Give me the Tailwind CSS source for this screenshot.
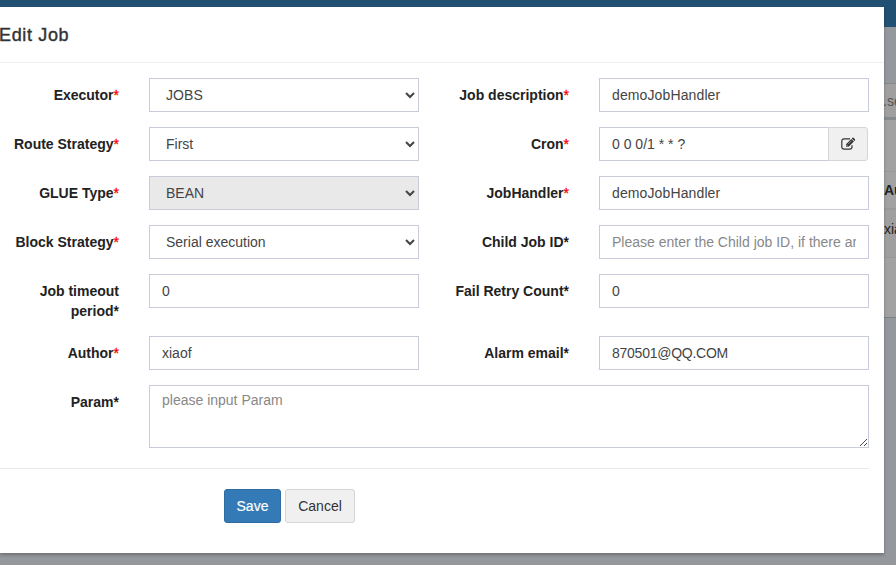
<!DOCTYPE html>
<html lang="en">
<head>
<meta charset="utf-8">
<title>Edit Job</title>
<script src="https://cdn.jsdelivr.net/npm/@tailwindcss/browser@4"></script>
</head>
<body class="relative h-[565px] w-[896px] overflow-hidden bg-[#94979c] font-['Liberation_Sans',Arial,sans-serif] text-sm leading-5 text-[#333]">
<!-- Dimmed page behind the dialog -->
<div class="flex h-full flex-col">
  <div class="h-[27px] shrink-0 bg-[#225072]"></div>
  <div class="mt-14 flex h-[34px] shrink-0 items-center justify-end overflow-hidden border-t border-[#85878b] bg-[#9f9f9f] text-[#555]"><span class="w-[13px] whitespace-nowrap">.se</span></div>
  <div class="h-[3px] shrink-0 bg-[#85888f]"></div>
  <div class="flex h-[198px] shrink-0 flex-col items-end border-b border-[#7d8083] bg-[#a2a2a2]">
    <div class="h-[52px] w-full border-b border-[#989898]"></div>
    <div class="flex h-[38px] w-full items-center justify-end border-b-2 border-[#999] font-bold text-[#222]"><span class="w-3 whitespace-nowrap">Au</span></div>
    <div class="flex h-[48px] w-full justify-end border-b border-[#989898] bg-[#9f9f9f] pt-[9px] text-[#222]"><span class="w-3 whitespace-nowrap">xia</span></div>
  </div>
</div>

<!-- Dialog -->
<div class="absolute left-0 top-[7px] flex h-[546px] w-[884px] flex-col bg-white shadow-[0_2px_3px_rgba(0,0,0,0.25)]">
  <div class="flex h-14 shrink-0 items-center border-b border-[#f0f0f0]"><h4 class="-ml-px text-lg tracking-[0.65px] [-webkit-text-stroke:0.4px_#333]">Edit Job</h4></div>
  <form class="pr-[15px] pt-[15px]">
    <div class="grid grid-cols-[119px_270px_150px_270px] gap-y-[15px]">
      <label class="whitespace-nowrap pt-[7px] text-right font-bold text-[#222]">Executor<span class="font-normal text-[#f00] [-webkit-text-stroke:0.3px_#f00]">*</span></label>
      <div class="ml-[30px] flex h-[34px] w-[270px] items-center justify-between border border-[#c8cbd9] pl-4 pr-0.5 text-[#444]"><span class="tracking-[0.1px]">JOBS</span><svg class="h-3 w-3" viewBox="0 0 12 12" fill="none" stroke="#444" stroke-width="2"><path d="M2 4l4 4 4-4"/></svg></div>
      <label class="ml-[30px] w-[150px] whitespace-nowrap pt-[7px] text-right font-bold text-[#222]">Job description<span class="font-normal text-[#f00] [-webkit-text-stroke:0.3px_#f00]">*</span></label>
      <input class="ml-[60px] h-[34px] w-[270px] border border-[#c8cbd9] px-3 tracking-[0.12px] text-[#444]" value="demoJobHandler">

      <label class="whitespace-nowrap pt-[7px] text-right font-bold text-[#222]">Route Strategy<span class="font-normal text-[#f00] [-webkit-text-stroke:0.3px_#f00]">*</span></label>
      <div class="ml-[30px] flex h-[34px] w-[270px] items-center justify-between border border-[#c8cbd9] pl-4 pr-0.5 text-[#444]"><span>First</span><svg class="h-3 w-3" viewBox="0 0 12 12" fill="none" stroke="#444" stroke-width="2"><path d="M2 4l4 4 4-4"/></svg></div>
      <label class="ml-[30px] w-[150px] pt-[7px] text-right font-bold text-[#222]">Cron<span class="font-normal text-[#f00] [-webkit-text-stroke:0.3px_#f00]">*</span></label>
      <div class="ml-[60px] flex h-[34px] w-[270px]">
        <input class="w-[229px] border border-r-0 border-[#c8cbd9] px-3 text-[#444]" value="0 0 0/1 * * ?">
        <button type="button" class="flex w-10 items-center justify-center rounded-r-[3px] border border-[#d5d5d5] bg-[#f0f0f0]" aria-label="Edit cron">
          <svg class="h-[14px] w-[14px]" viewBox="0 0 14 14" fill="none" stroke="#333"><path stroke-width="1.2" d="M9 1.9H3A2.2 2.2 0 0 0 .8 4.1v5.8A2.2 2.2 0 0 0 3 12.1h5.8A2.2 2.2 0 0 0 11 9.9V8.3"/><path fill="#333" stroke="none" d="M5 9.8V7.2l5.3-5.3 2.6 2.6L7.6 9.8zM10.8 1.4l.7-.7c.3-.3.7-.3 1 0l1.6 1.6c.3.3.3.7 0 1l-.8.7z"/><path stroke="#f0f0f0" stroke-width=".5" d="M7 7.2l3.4-3.4M5.7 7.7v1.3h1.4"/></svg>
        </button>
      </div>

      <label class="whitespace-nowrap pt-[7px] text-right font-bold text-[#222]">GLUE Type<span class="font-normal text-[#f00] [-webkit-text-stroke:0.3px_#f00]">*</span></label>
      <div class="ml-[30px] flex h-[34px] w-[270px] items-center justify-between border border-[#c8cbd9] bg-[#e9e9e9] pl-4 pr-0.5 text-[#444]"><span>BEAN</span><svg class="h-3 w-3" viewBox="0 0 12 12" fill="none" stroke="#444" stroke-width="2"><path d="M2 4l4 4 4-4"/></svg></div>
      <label class="ml-[30px] w-[150px] pt-[7px] text-right font-bold text-[#222]">JobHandler<span class="font-normal text-[#f00] [-webkit-text-stroke:0.3px_#f00]">*</span></label>
      <input class="ml-[60px] h-[34px] w-[270px] border border-[#c8cbd9] px-3 tracking-[0.12px] text-[#444]" value="demoJobHandler">

      <label class="whitespace-nowrap pt-[7px] text-right font-bold text-[#222]">Block Strategy<span class="font-normal text-[#f00] [-webkit-text-stroke:0.3px_#f00]">*</span></label>
      <div class="ml-[30px] flex h-[34px] w-[270px] items-center justify-between border border-[#c8cbd9] pl-4 pr-0.5 text-[#444]"><span>Serial execution</span><svg class="h-3 w-3" viewBox="0 0 12 12" fill="none" stroke="#444" stroke-width="2"><path d="M2 4l4 4 4-4"/></svg></div>
      <label class="ml-[30px] w-[150px] pt-[7px] text-right font-bold text-[#222]">Child Job ID<span class="font-normal text-black [-webkit-text-stroke:0.3px_#000]">*</span></label>
      <input class="ml-[60px] h-[34px] w-[270px] border border-[#c8cbd9] px-3 placeholder:text-[#888]" placeholder="Please enter the Child job ID, if there are more than one, separate them with commas">

      <label class="pt-[7px] text-right font-bold text-[#222]">Job timeout<br>period<span class="font-normal text-black [-webkit-text-stroke:0.3px_#000]">*</span></label>
      <input class="ml-[30px] h-[34px] w-[270px] border border-[#c8cbd9] px-3 text-[#444]" value="0">
      <label class="ml-[30px] w-[150px] pt-[7px] text-right font-bold text-[#222]">Fail Retry Count<span class="font-normal text-black [-webkit-text-stroke:0.3px_#000]">*</span></label>
      <input class="ml-[60px] h-[34px] w-[270px] border border-[#c8cbd9] px-3 text-[#444]" value="0">

      <label class="pt-[7px] text-right font-bold text-[#222]">Author<span class="font-normal text-[#f00] [-webkit-text-stroke:0.3px_#f00]">*</span></label>
      <input class="ml-[30px] h-[34px] w-[270px] border border-[#c8cbd9] px-3 text-[#444]" value="xiaof">
      <label class="ml-[30px] w-[150px] pt-[7px] text-right font-bold text-[#222]">Alarm email<span class="font-normal text-black [-webkit-text-stroke:0.3px_#000]">*</span></label>
      <input class="ml-[60px] h-[34px] w-[270px] border border-[#c8cbd9] px-3 tracking-[-0.25px] text-[#444]" value="870501@QQ.COM">

      <label class="pt-[7px] text-right font-bold text-[#222]">Param<span class="font-normal text-black [-webkit-text-stroke:0.3px_#000]">*</span></label>
      <div class="relative col-span-3 ml-[30px] h-[63px] w-[720px]">
        <textarea class="block h-full w-full resize-none border border-[#c8cbd9] px-3 py-1 leading-5 placeholder:text-[#888]" placeholder="please input Param"></textarea>
        <svg class="absolute bottom-0.5 right-0.5 h-[7px] w-[7px]" viewBox="0 0 7 7" stroke="#333" stroke-width=".9"><path d="M0 7L7 0M4 7l3-3"/></svg>
      </div>
    </div>
    <hr class="mt-5 border-[#eaeaea]">
    <div class="mt-5 flex gap-1 pl-56">
      <button type="button" class="h-[34px] w-[57px] rounded-[3px] border border-[#2e6da4] bg-[#337ab7] text-white [-webkit-text-stroke:0.2px_#fff]">Save</button>
      <button type="button" class="h-[34px] w-[70px] rounded-[3px] border border-[#d5d5d5] bg-[#f0f0f0]">Cancel</button>
    </div>
  </form>
</div>
</body>
</html>
